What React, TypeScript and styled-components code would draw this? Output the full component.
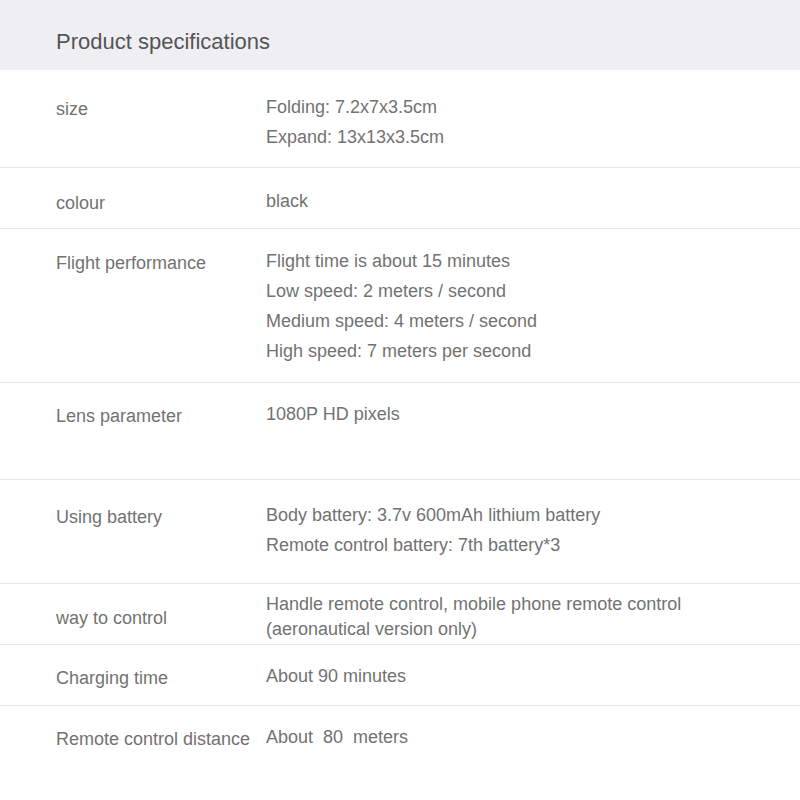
import React from "react";
import styled, { createGlobalStyle } from "styled-components";

const Global = createGlobalStyle`
  html, body { margin: 0; padding: 0; background: #ffffff; }
  body { font-family: "Liberation Sans", Arial, sans-serif; }
`;

const Page = styled.div`
  width: 800px;
  height: 800px;
  overflow: hidden;
  background: #ffffff;
`;

const Header = styled.div`
  height: 70px;
  background: #efeff3;
  display: flex;
  align-items: center;
  padding: 13px 0 0 56px;
  box-sizing: border-box;
`;

const Title = styled.h1`
  margin: 0;
  font-size: 22px;
  font-weight: 400;
  color: #555555;
  line-height: 26px;
`;

const Row = styled.div<{ $h: number; $pt: number; $last?: boolean }>`
  display: grid;
  grid-template-columns: 210px 1fr;
  height: ${(p) => p.$h}px;
  padding: ${(p) => p.$pt}px 0 0 56px;
  box-sizing: border-box;
  border-bottom: ${(p) => (p.$last ? "none" : "1px solid #e6e6e6")};
`;

const Label = styled.div<{ $off: number }>`
  margin-top: ${(p) => p.$off}px;
  font-size: 18px;
  line-height: 30px;
  color: #727272;
  white-space: nowrap;
`;

const Values = styled.div`
  display: flex;
  flex-direction: column;
`;

const Value = styled.div<{ $lh: number }>`
  font-size: 18px;
  line-height: ${(p) => p.$lh}px;
  color: #727272;
  white-space: pre;
`;

type Spec = {
  label: string;
  values: string[];
  h: number;
  pt: number;
  lh?: number;
  off?: number;
};

const specs: Spec[] = [
  { label: "size", values: ["Folding: 7.2x7x3.5cm", "Expand: 13x13x3.5cm"], h: 98, pt: 22 },
  { label: "colour", values: ["black"], h: 61, pt: 18 },
  {
    label: "Flight performance",
    values: [
      "Flight time is about 15 minutes",
      "Low speed: 2 meters / second",
      "Medium speed: 4 meters / second",
      "High speed: 7 meters per second",
    ],
    h: 154,
    pt: 17,
  },
  { label: "Lens parameter", values: ["1080P HD pixels"], h: 97, pt: 16 },
  {
    label: "Using battery",
    values: ["Body battery: 3.7v 600mAh lithium battery", "Remote control battery: 7th battery*3"],
    h: 104,
    pt: 20,
  },
  {
    label: "way to control",
    values: ["Handle remote control, mobile phone remote control", "(aeronautical version only)"],
    h: 61,
    pt: 8,
    lh: 25,
    off: 11,
  },
  { label: "Charging time", values: ["About 90 minutes"], h: 61, pt: 16 },
  { label: "Remote control distance", values: ["About  80  meters"], h: 94, pt: 16 },
];

export default function App() {
  return (
    <Page>
      <Global />
      <Header>
        <Title>Product specifications</Title>
      </Header>
      {specs.map((s, i) => (
        <Row key={s.label} $h={s.h} $pt={s.pt} $last={i === specs.length - 1}>
          <Label $off={s.off ?? 2}>{s.label}</Label>
          <Values>
            {s.values.map((v) => (
              <Value key={v} $lh={s.lh ?? 30}>
                {v}
              </Value>
            ))}
          </Values>
        </Row>
      ))}
    </Page>
  );
}
